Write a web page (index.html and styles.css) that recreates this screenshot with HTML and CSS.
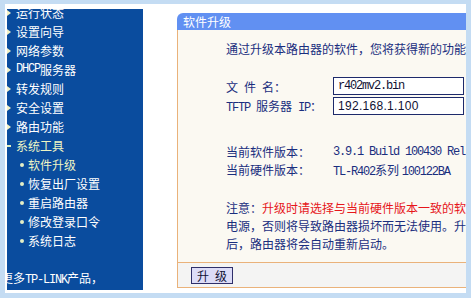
FILE: index.html
```html
<!DOCTYPE html>
<html lang="zh-CN">
<head>
    <meta charset="UTF-8">
    <meta name="viewport" content="width=device-width, initial-scale=1.0">
    <title>软件升级</title>
    <link rel="stylesheet" href="styles.css">
</head>
<body>

    <div class="frame">
        <!-- left menu, scrolled a little so the first item is cut -->
        <div class="menu">
            <ul class="menu-list">
                <li class="top"><i class="arrow"></i>运行状态</li>
                <li class="top"><i class="arrow"></i>设置向导</li>
                <li class="top"><i class="arrow"></i>网络参数</li>
                <li class="top"><i class="arrow"></i><span class="lat">DHCP</span>服务器</li>
                <li class="top"><i class="arrow"></i>转发规则</li>
                <li class="top"><i class="arrow"></i>安全设置</li>
                <li class="top"><i class="arrow"></i>路由功能</li>
                <li class="top open"><i class="dash"></i>系统工具</li>
                <li class="sub active"><i class="dot"></i>软件升级</li>
                <li class="sub"><i class="dot"></i>恢复出厂设置</li>
                <li class="sub"><i class="dot"></i>重启路由器</li>
                <li class="sub"><i class="dot"></i>修改登录口令</li>
                <li class="sub"><i class="dot"></i>系统日志</li>
            </ul>
            <div class="more">更多<span class="lat">TP-LINK</span>产品，</div>
        </div>

        <!-- main panel -->
        <div class="panel">
            <div class="panel-title">软件升级</div>
            <div class="panel-body">
                <p class="intro">通过升级本路由器的软件，您将获得新的功能</p>

                <div class="form-row">
                    <span class="label">文&ensp;件&ensp;名：</span>
                    <span class="field lat">r402mv2.bin</span>
                </div>
                <div class="form-row">
                    <span class="label"><span class="lat">TFTP</span>&ensp;服务器&ensp;<span class="lat">IP</span>：</span>
                    <span class="field ip">192.168.1.100</span>
                </div>

                <div class="info">
                    <div class="info-row"><span class="label">当前软件版本：</span><span class="lat">3.9.1 Build 100430 Rel</span></div>
                    <div class="info-row"><span class="label">当前硬件版本：</span><span><span class="lat">TL-R402</span>系列 <span class="lat">100122BA</span></span></div>
                </div>

                <div class="notice">
                    <p>注意：<span class="warn">升级时请选择与当前硬件版本一致的软</span></p>
                    <p>电源，否则将导致路由器损坏而无法使用。升</p>
                    <p>后，路由器将会自动重新启动。</p>
                </div>
            </div>
            <div class="panel-foot">
                <button class="btn">升&ensp;级</button>
            </div>
        </div>
    </div>

</body>
</html>
```

FILE: styles.css
```css
body {
    margin: 0;
    width: 476px;
    height: 302px;
    overflow: hidden;
    background: #ffffff;
    font-family: "Noto Sans CJK SC", sans-serif;
    font-size: 12px;
}
.lat {
    font-family: "Liberation Mono", monospace;
    font-size: 12px;
    letter-spacing: -1.2px;
}
.frame {
    display: flex;
    width: 461px;
    height: 289px;
    border-style: solid;
    border-color: #c4dcf3;
    border-width: 4px 5px 5px 5px;
    background: #ffffff;
    overflow: hidden;
}

/* menu */
.menu {
    width: 136px;
    height: 281px;
    margin: 5px 0 0 2px;
    background: #0a4c9e;
    color: #ffffff;
    overflow: hidden;
    white-space: nowrap;
}
.menu-list {
    list-style: none;
    margin: -6px 0 0 0;
    padding: 0;
}
.menu-list li {
    height: 19px;
    line-height: 19px;
    display: flex;
    align-items: center;
}
.menu-list .sub {
    padding-left: 13px;
}
.menu-list .active,
.menu-list .open {
    color: #eef5c4;
}
.arrow {
    width: 0;
    height: 0;
    border-left: 4px solid #f2f2c6;
    border-top: 3px solid transparent;
    border-bottom: 3px solid transparent;
    margin-right: 5px;
}
.dash {
    width: 4px;
    height: 2px;
    background: #dfeec0;
    margin-right: 5px;
}
.dot {
    width: 4px;
    height: 4px;
    border-radius: 50%;
    background: #e4efc6;
    margin-right: 4px;
}
.more {
    margin: 18px 0 0 -6px;
    height: 19px;
    line-height: 19px;
}

/* panel */
.panel {
    width: 289px;
    margin: 9px 0 0 34px;
    height: 275px;
    overflow: hidden;
    white-space: nowrap;
    color: #1a2e7e;
}
.panel-title {
    height: 17px;
    line-height: 17px;
    padding-left: 6px;
    background: #6190f2;
    color: #ffffff;
    border-top-left-radius: 6px;
}
.panel-body {
    height: 232px;
    padding-left: 48px;
    background: #fbf9f2;
    border-left: 1px solid #eab27a;
}
.intro {
    margin: 0;
    padding-top: 10px;
    line-height: 18px;
}
.form-row {
    display: flex;
    align-items: center;
    height: 18px;
    margin-top: 2px;
}
.form-row:first-of-type {
    margin-top: 19px;
}
.label {
    display: inline-block;
    width: 107px;
    flex-shrink: 0;
}
.field {
    box-sizing: border-box;
    width: 131px;
    height: 18px;
    line-height: 16px;
    padding-left: 4px;
    border: 1px solid #1d2a6b;
    background: #ffffff;
    color: #111133;
    flex-shrink: 0;
}
.field.ip {
    font-family: "Liberation Sans", sans-serif;
    font-size: 12px;
    letter-spacing: 0.3px;
}
.info {
    margin-top: 28px;
}
.info-row {
    height: 18px;
    line-height: 18px;
    display: flex;
}
.notice {
    margin-top: 20px;
}
.notice p {
    margin: 0;
    line-height: 18px;
}
.warn {
    color: #e6161b;
}
.panel-foot {
    height: 24px;
    padding-left: 13px;
    background: #f4f4f3;
    border-top: 1px solid #eab27a;
    border-bottom: 1px solid #eab27a;
    border-left: 1px solid #eab27a;
}
.btn {
    margin-top: 4px;
    width: 42px;
    height: 17px;
    padding: 0;
    border: 1px solid #2e2f6a;
    background: #dcdcf7;
    color: #111133;
    font-family: "Noto Sans CJK SC", sans-serif;
    font-size: 12px;
    line-height: 15px;
}
```
